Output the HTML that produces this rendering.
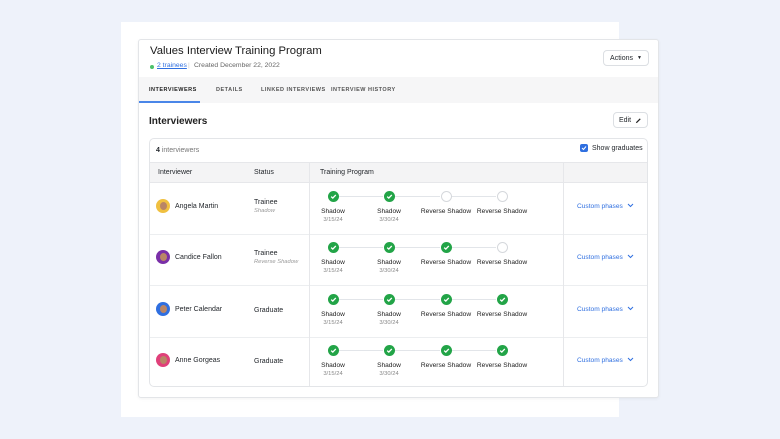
<!DOCTYPE html>
<html><head><meta charset="utf-8"><style>
*{margin:0;padding:0;box-sizing:border-box}
body{width:780px;height:439px;background:#eef2fa;font-family:"Liberation Sans",sans-serif;position:relative;overflow:hidden;color:#1f2328}
.a{position:absolute}
.back{left:121px;top:22px;width:498px;height:395px;background:#fff}
.card{left:138px;top:39px;width:521px;height:359px;background:#fff;border:1px solid #e3e5e8;border-radius:3px;box-shadow:0 1px 3px rgba(0,0,0,.05)}
.btn{background:#fff;border:1px solid #dcdfe3;border-radius:4px;font-size:7px;display:flex;align-items:center;justify-content:center;gap:4px}
.tab{font-size:5.5px;letter-spacing:.5px;color:#555;font-weight:bold;top:87px}
.t7{font-size:7px}
.cell{font-size:7px}
.av{width:14px;height:14px;border-radius:50%}
.ck{width:11px;height:11px;border-radius:50%;background:#22a447;display:flex;align-items:center;justify-content:center}
.em{width:11px;height:11px;border-radius:50%;background:#fff;border:1px solid #d5d8dc}
.ln{height:1px;background:#e2e5e9}
.lb{font-size:6.6px;width:70px;text-align:center;color:#222}
.dt{font-size:5.8px;width:70px;text-align:center;color:#888}
.cp{font-size:6.6px;color:#2f6fe0;left:577px}
</style></head><body>
<div class="a back"></div>
<div class="a card"></div>
<div class="a" style="left:150px;top:45px;font-size:11.3px;color:#1a1a1a">Values Interview Training Program</div>
<div class="a" style="left:150px;top:65px;width:4px;height:4px;border-radius:50%;background:#4cc26a"></div>
<div class="a" style="left:157px;top:62px;font-size:6.8px;color:#2f6fe0;text-decoration:underline">2 trainees</div>
<div class="a" style="left:188px;top:62px;font-size:6.8px;color:#ccc">|</div>
<div class="a" style="left:194px;top:62px;font-size:6.8px;color:#666">Created December 22, 2022</div>
<div class="a btn" style="left:603px;top:50px;width:46px;height:16px">Actions <span style="font-size:5px">▼</span></div>
<div class="a" style="left:139px;top:77px;width:519px;height:26px;background:#f6f6f7"></div>
<div class="a" style="left:139px;top:101px;width:61px;height:2px;background:#4a86e8"></div>
<div class="a tab" style="left:149px;color:#222">INTERVIEWERS</div>
<div class="a tab" style="left:216px">DETAILS</div>
<div class="a tab" style="left:261px">LINKED INTERVIEWS</div>
<div class="a tab" style="left:331px">INTERVIEW HISTORY</div>
<div class="a" style="left:149px;top:116px;font-size:10px;font-weight:bold;color:#222">Interviewers</div>
<div class="a btn" style="left:613px;top:112px;width:35px;height:16px">Edit <svg width="7" height="7" viewBox="0 0 8 8"><path d="M1 7 L1.5 5.5 L5.5 1.5 L6.5 2.5 L2.5 6.5 Z" fill="#222"/></svg></div>
<div class="a" style="left:149px;top:138px;width:499px;height:249px;border:1px solid #e3e5e8;border-radius:5px;overflow:hidden">
<div class="a" style="left:0;top:23px;width:499px;height:21px;background:#f4f4f5;border-top:1px solid #e6e7ea;border-bottom:1px solid #e6e7ea"></div>
<div class="a" style="left:0;top:95px;width:499px;height:1px;background:#eceef0"></div>
<div class="a" style="left:0;top:146px;width:499px;height:1px;background:#eceef0"></div>
<div class="a" style="left:0;top:198px;width:499px;height:1px;background:#eceef0"></div>
<div class="a" style="left:159px;top:23px;width:1px;height:226px;background:#e6e7ea"></div>
<div class="a" style="left:413px;top:23px;width:1px;height:226px;background:#e6e7ea"></div>
</div>
<div class="a t7" style="left:156px;top:147px"><b>4</b> <span style="color:#777">interviewers</span></div>
<div class="a" style="left:580px;top:144px;width:8px;height:8px;border-radius:2px;background:#2f6fe0;display:flex;align-items:center;justify-content:center"><svg width="6" height="6" viewBox="0 0 6 6"><path d="M1 3 L2.5 4.5 L5 1.5" stroke="#fff" stroke-width="1" fill="none"/></svg></div>
<div class="a t7" style="left:592px;top:145px">Show graduates</div>
<div class="a t7" style="left:158px;top:169px">Interviewer</div>
<div class="a t7" style="left:254px;top:169px">Status</div>
<div class="a t7" style="left:320px;top:169px">Training Program</div>

<div id="rows"></div>
<script>
const rows=[
 [182,"Angela Martin","Trainee","Shadow",2,"#f0c040"],
 [233,"Candice Fallon","Trainee","Reverse Shadow",3,"#7a2fa8"],
 [285,"Peter Calendar","Graduate","",4,"#2f6fe0"],
 [336,"Anne Gorgeas","Graduate","",4,"#e0407a"]];
const xs=[333,389,446,502],labs=["Shadow","Shadow","Reverse Shadow","Reverse Shadow"],dts=["3/15/24","3/30/24","",""];
let h="";
for(const [t,n,s,ss,k,c] of rows){
 h+=`<div class="a av" style="left:156px;top:${t+17}px;background:${c}"><div style="margin:3px auto 0;width:7px;height:8px;border-radius:50%;background:#b98566"></div></div>`;
 h+=`<div class="a cell" style="left:175px;top:${t+21}px">${n}</div>`;
 h+=`<div class="a cell" style="left:254px;top:${ss?t+17:t+22}px">${s}</div>`;
 if(ss)h+=`<div class="a" style="left:254px;top:${t+26}px;font-size:5.8px;color:#999;font-style:italic">${ss}</div>`;
 for(let i=0;i<3;i++)h+=`<div class="a ln" style="left:${xs[i]+6}px;top:${t+14}px;width:${xs[i+1]-xs[i]-12}px"></div>`;
 xs.forEach((x,i)=>{
  h+= i<k?`<div class="a ck" style="left:${x-5.5}px;top:${t+8.5}px"><svg width="7" height="7" viewBox="0 0 7 7"><path d="M1.2 3.6 L2.8 5.1 L5.8 1.9" stroke="#fff" stroke-width="1.3" fill="none"/></svg></div>`:`<div class="a em" style="left:${x-5.5}px;top:${t+8.5}px"></div>`;
  h+=`<div class="a lb" style="left:${x-35}px;top:${t+26}px">${labs[i]}</div>`;
  if(dts[i])h+=`<div class="a dt" style="left:${x-35}px;top:${t+35}px">${dts[i]}</div>`;
 });
 h+=`<div class="a cp" style="top:${t+21}px">Custom phases <svg width="7" height="5" viewBox="0 0 7 5" style="margin-left:2px"><path d="M1 1 L3.5 3.5 L6 1" stroke="#2f6fe0" stroke-width="1" fill="none"/></svg></div>`;
}
document.getElementById("rows").innerHTML=h;
</script>
</body></html>
